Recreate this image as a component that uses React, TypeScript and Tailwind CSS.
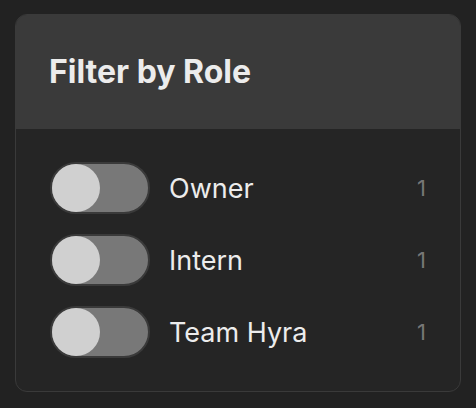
import { useState } from "react"

interface Role {
  name: string
  count: number
}

const roles: Role[] = [
  { name: "Owner", count: 1 },
  { name: "Intern", count: 1 },
  { name: "Team Hyra", count: 1 },
]

function Toggle({ on, onChange }: { on: boolean; onChange: () => void }) {
  return (
    <button
      onClick={onChange}
      className={`relative w-[100px] h-[52px] shrink-0 rounded-full border-2 border-[#3a3a3a] ${on ? "bg-[#4a8df0]" : "bg-[#787878]"}`}
    >
      <span
        className={`absolute top-0 w-[48px] h-[48px] rounded-full bg-[#d0d0d0] ${on ? "left-[48px]" : "left-0"}`}
      />
    </button>
  )
}

export default function App() {
  const [active, setActive] = useState<Record<string, boolean>>({})

  return (
    <div
      className="min-h-[408px] w-full bg-[#222222] pt-[14px] px-[15px]"
      style={{ fontFamily: "Inter, 'Noto Sans', sans-serif" }}
    >
      <div className="w-[446px] h-[378px] rounded-[12px] border border-[#3a3a3a] bg-[#252525] overflow-hidden">
        <div className="h-[114px] bg-[#3a3a3a] flex items-center px-[33px]">
          <h2 className="text-[32px] leading-none font-bold text-[#ececec]">Filter by Role</h2>
        </div>
        <div className="flex flex-col gap-[20px] pt-[33px] pl-[34px] pr-[34px]">
          {roles.map((r) => (
            <div key={r.name} className="flex items-center h-[52px]">
              <Toggle
                on={!!active[r.name]}
                onChange={() => setActive((a) => ({ ...a, [r.name]: !a[r.name] }))}
              />
              <span className="ml-[19px] text-[27px] leading-none text-[#ececec] flex-1">{r.name}</span>
              <span className="text-[22px] leading-none text-[#777777]">{r.count}</span>
            </div>
          ))}
        </div>
      </div>
    </div>
  )
}
